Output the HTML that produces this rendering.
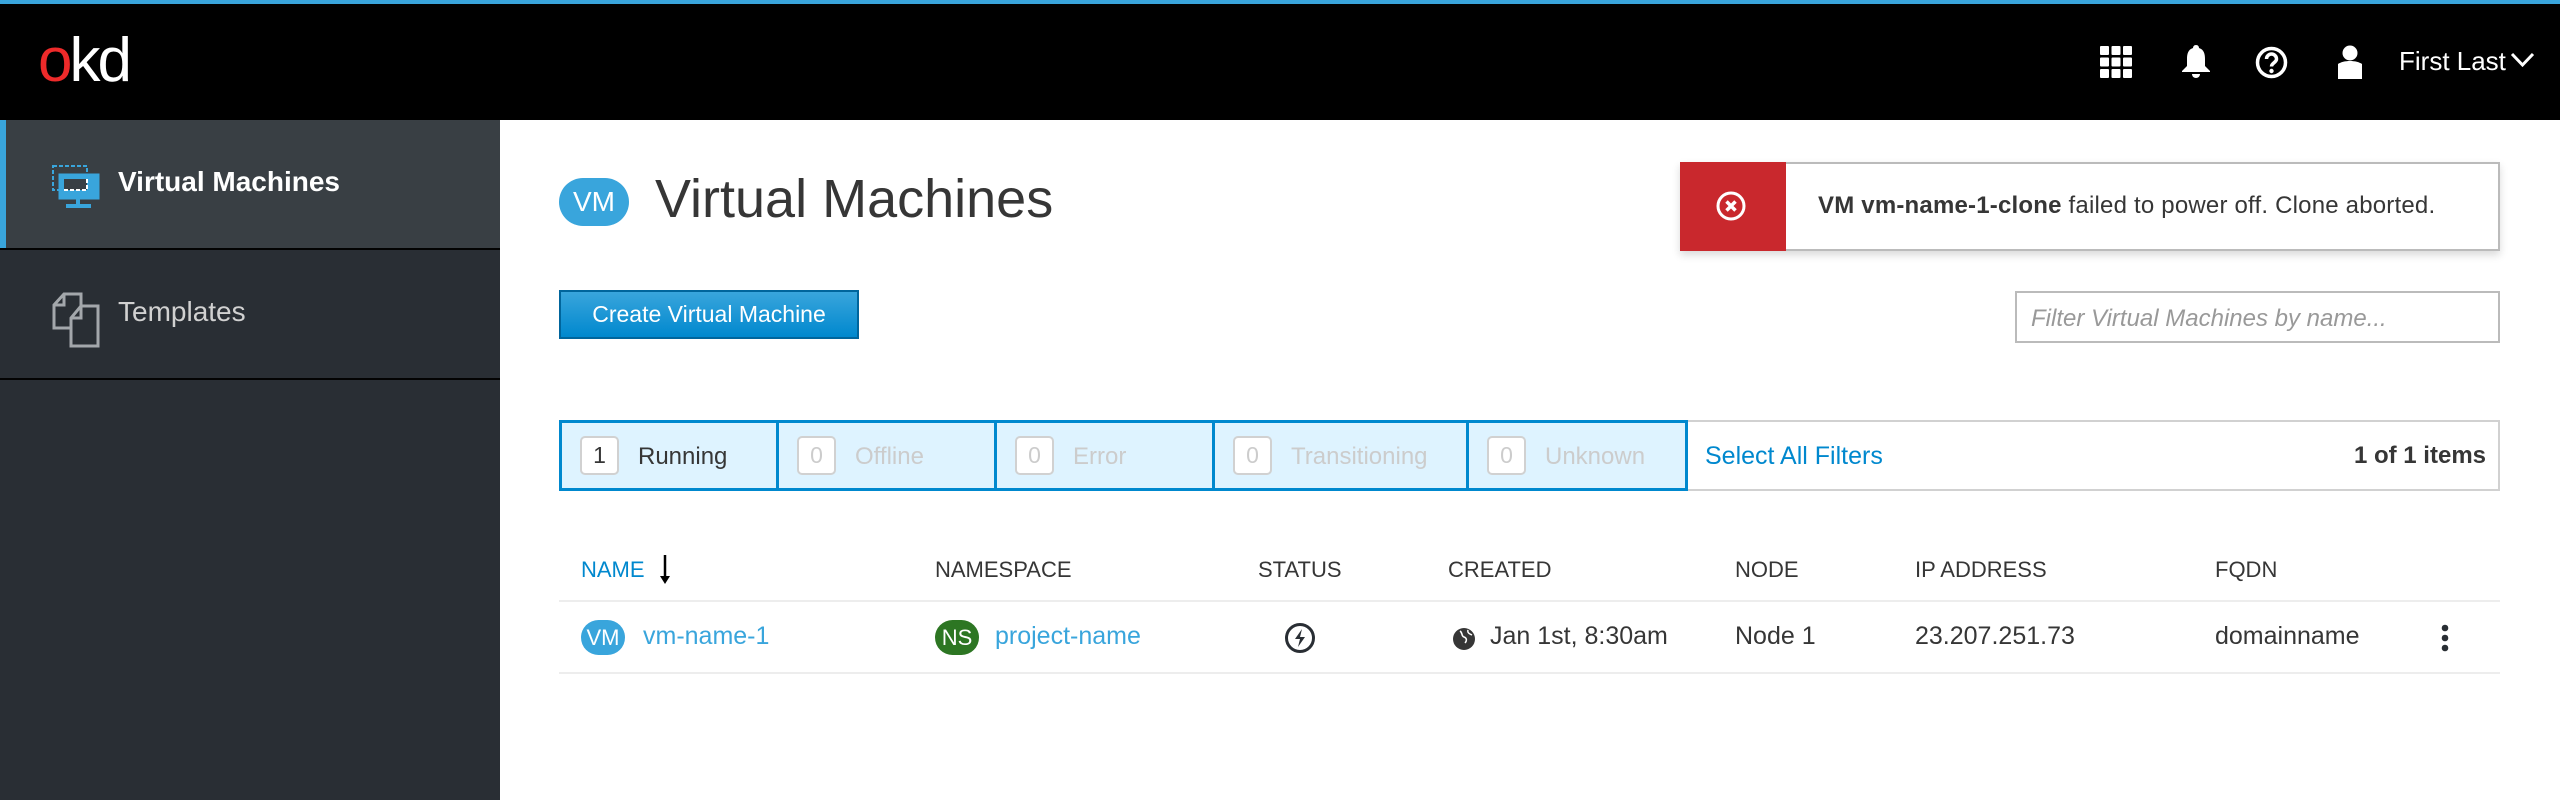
<!DOCTYPE html>
<html><head><meta charset="utf-8"><style>
*{margin:0;padding:0;box-sizing:border-box}
body{width:2560px;height:800px;overflow:hidden;background:#fff;font-family:"Liberation Sans",sans-serif;position:relative;color:#363636}
.a{position:absolute;white-space:nowrap}
.badge{position:absolute;border-radius:24px;color:#fff;text-align:center}
.fb{position:absolute;top:420px;height:71px;background:#def3ff;border:3px solid #0088ce}
.cnt{position:absolute;left:18px;top:13px;width:39px;height:39px;background:#fff;border:2px solid #d1d1d1;border-radius:5px;font-size:23px;line-height:35px;text-align:center;color:#ccc}
.fl{position:absolute;top:20px;font-size:24px;color:#ccc}
.th{position:absolute;top:557px;font-size:22px;color:#363636}
.td{position:absolute;top:622px;font-size:25px;color:#363636}
</style></head><body>
<div class="a" style="left:0;top:0;width:2560px;height:4px;background:#39a5dc"></div>
<div class="a" style="left:0;top:4px;width:2560px;height:116px;background:#000"></div>
<div class="a" style="left:38px;top:26px;font-size:62px;line-height:70px;letter-spacing:-3px;color:#fff;font-weight:300"><span style="color:#ee2a2a">o</span>kd</div>
<!-- grid -->
<svg class="a" style="left:2100px;top:46px" width="32" height="32" viewBox="0 0 32 32" fill="#fff">
<rect x="0" y="0" width="9" height="9" rx="1"/><rect x="11.5" y="0" width="9" height="9" rx="1"/><rect x="23" y="0" width="9" height="9" rx="1"/>
<rect x="0" y="11.5" width="9" height="9" rx="1"/><rect x="11.5" y="11.5" width="9" height="9" rx="1"/><rect x="23" y="11.5" width="9" height="9" rx="1"/>
<rect x="0" y="23" width="9" height="9" rx="1"/><rect x="11.5" y="23" width="9" height="9" rx="1"/><rect x="23" y="23" width="9" height="9" rx="1"/></svg>
<svg class="a" style="left:2180px;top:45px" width="32" height="34" viewBox="0 0 32 34" fill="#fff"><path d="M16 0c2 0 3 1.5 3 3 5 1.5 6 6 6 11v7l5 5v1H2v-1l5-5v-7c0-5 1-9.5 6-11 0-1.5 1-3 3-3zM12 29h8c0 2.5-2 4-4 4s-4-1.5-4-4z"/></svg>
<svg class="a" style="left:2255px;top:46px" width="33" height="33" viewBox="0 0 33 33"><circle cx="16.5" cy="16.5" r="14" fill="none" stroke="#fff" stroke-width="3.5"/><path d="M11.5 13a5 5 0 0 1 10 0c0 3.5-5 4-5 7.5" fill="none" stroke="#fff" stroke-width="3.5"/><circle cx="16.5" cy="25" r="2.2" fill="#fff"/></svg>
<svg class="a" style="left:2336px;top:45px" width="28" height="34" viewBox="0 0 28 34" fill="#fff"><circle cx="14" cy="8" r="7.5"/><path d="M2 19c3-2 7-3 12-3s9 1 12 3v15H2z"/></svg>
<div class="a" style="left:2399px;top:46px;font-size:26px;color:#fff">First Last</div>
<svg class="a" style="left:2510px;top:52px" width="25" height="16" viewBox="0 0 25 16"><path d="M2 2l10.5 11L23 2" fill="none" stroke="#fff" stroke-width="3"/></svg>
<!-- sidebar -->
<div class="a" style="left:0;top:120px;width:500px;height:680px;background:#292e34"></div>
<div class="a" style="left:0;top:120px;width:500px;height:128px;background:#393f44;border-left:6px solid #39a5dc"></div>
<div class="a" style="left:0;top:248px;width:500px;height:2px;background:#030303"></div>
<div class="a" style="left:0;top:378px;width:500px;height:2px;background:#030303"></div>
<svg class="a" style="left:52px;top:165px" width="48" height="43" viewBox="0 0 48 43"><rect x="6.5" y="8.5" width="41" height="26" fill="#39a5dc"/><rect x="14" y="39" width="25" height="4" fill="#39a5dc"/><rect x="24" y="34" width="4" height="6" fill="#39a5dc"/>
<rect x="1" y="1" width="34" height="24" fill="none" stroke="#39a5dc" stroke-width="2" stroke-dasharray="4 2"/><rect x="12" y="14" width="23" height="11" fill="#393f44"/><path d="M12 25h23V13" fill="none" stroke="#fff" stroke-width="2" stroke-dasharray="4 2"/></svg>
<div class="a" style="left:118px;top:166px;font-size:28px;font-weight:bold;color:#fff">Virtual Machines</div>
<svg class="a" style="left:52px;top:292px" width="48" height="56" viewBox="0 0 48 56" fill="none" stroke="#a3a7ab" stroke-width="3"><path d="M12 2h17v34H2V13z M2 13h10V2"/><path d="M29 14h17v40H19V26z M19 26h10V14" fill="#292e34"/></svg>
<div class="a" style="left:118px;top:296px;font-size:28px;color:#d1d1d1">Templates</div>
<!-- title -->
<div class="badge" style="left:559px;top:178px;width:70px;height:48px;background:#39a5dc;font-size:28px;line-height:48px">VM</div>
<div class="a" style="left:655px;top:168px;font-size:54px;font-weight:300;color:#363636">Virtual Machines</div>
<div class="a" style="left:559px;top:290px;width:300px;height:49px;background:linear-gradient(#39a5dc,#0088ce);border:2px solid #00659c;color:#fff;font-size:23px;line-height:45px;text-align:center">Create Virtual Machine</div>
<!-- toast -->
<div class="a" style="left:1680px;top:162px;width:820px;height:89px;background:#fff;border:2px solid #bbb;box-shadow:0 4px 8px rgba(0,0,0,.15)"></div>
<div class="a" style="left:1680px;top:162px;width:106px;height:89px;background:#c9282d"></div>
<svg class="a" style="left:1716px;top:191px" width="30" height="30" viewBox="0 0 30 30"><circle cx="15" cy="15" r="13" fill="none" stroke="#fff" stroke-width="3"/><path d="M10.5 10.5l9 9M19.5 10.5l-9 9" stroke="#fff" stroke-width="3.5"/></svg>
<div class="a" style="left:1818px;top:192px;font-size:24px;letter-spacing:0.2px;color:#363636"><b>VM vm-name-1-clone</b> failed to power off. Clone aborted.</div>
<!-- filter input -->
<div class="a" style="left:2015px;top:291px;width:485px;height:52px;border:2px solid #bbb;font-size:24px;font-style:italic;color:#999;padding:12px 0 0 14px">Filter Virtual Machines by name...</div>
<!-- filter bar -->
<div class="a" style="left:559px;top:420px;width:1941px;height:71px;border:2px solid #d1d1d1"></div>
<div class="fb" style="left:559px;width:223px"><div class="cnt" style="color:#363636">1</div><div class="fl" style="left:76px;color:#363636">Running</div></div>
<div class="fb" style="left:776px;width:224px"><div class="cnt">0</div><div class="fl" style="left:76px">Offline</div></div>
<div class="fb" style="left:994px;width:224px"><div class="cnt">0</div><div class="fl" style="left:76px">Error</div></div>
<div class="fb" style="left:1212px;width:260px"><div class="cnt">0</div><div class="fl" style="left:76px">Transitioning</div></div>
<div class="fb" style="left:1466px;width:222px"><div class="cnt">0</div><div class="fl" style="left:76px">Unknown</div></div>
<div class="a" style="left:1705px;top:442px;font-size:25px;color:#0088ce">Select All Filters</div>
<div class="a" style="left:2336px;top:442px;width:150px;text-align:right;font-size:24px;font-weight:bold;color:#363636">1 of 1 items</div>
<!-- table -->
<div class="th" style="left:581px;color:#0088ce">NAME</div>
<svg class="a" style="left:659px;top:555px" width="12" height="30" viewBox="0 0 12 30"><path d="M6 0v24" stroke="#000" stroke-width="2.5"/><path d="M1 21l5 8 5-8z"/></svg>
<div class="th" style="left:935px">NAMESPACE</div>
<div class="th" style="left:1258px">STATUS</div>
<div class="th" style="left:1448px">CREATED</div>
<div class="th" style="left:1735px">NODE</div>
<div class="th" style="left:1915px">IP ADDRESS</div>
<div class="th" style="left:2215px">FQDN</div>
<div class="a" style="left:559px;top:600px;width:1941px;height:2px;background:#ededed"></div>
<div class="a" style="left:559px;top:672px;width:1941px;height:2px;background:#ededed"></div>
<div class="badge" style="left:581px;top:620px;width:44px;height:35px;background:#39a5dc;font-size:22px;line-height:35px;border-radius:18px">VM</div>
<div class="td" style="left:643px;color:#39a5dc">vm-name-1</div>
<div class="badge" style="left:935px;top:620px;width:44px;height:35px;background:#2d7623;font-size:22px;line-height:35px;border-radius:18px">NS</div>
<div class="td" style="left:995px;color:#39a5dc">project-name</div>
<svg class="a" style="left:1284px;top:622px" width="32" height="32" viewBox="0 0 32 32"><circle cx="16" cy="16" r="13.5" fill="none" stroke="#292e34" stroke-width="3"/><path d="M18 7l-7 10h5l-2 8 7-10h-5z" fill="#292e34"/></svg>
<svg class="a" style="left:1452px;top:627px" width="24" height="24" viewBox="0 0 24 24"><circle cx="12" cy="12" r="11" fill="#363636"/><path d="M8 4c3 2 1 5 4 6s3 4 1 6M16 3c-1 3 2 4 4 5" stroke="#fff" stroke-width="1.5" fill="none"/></svg>
<div class="td" style="left:1490px">Jan 1st, 8:30am</div>
<div class="td" style="left:1735px">Node 1</div>
<div class="td" style="left:1915px">23.207.251.73</div>
<div class="td" style="left:2215px">domainname</div>
<svg class="a" style="left:2440px;top:624px" width="10" height="28" viewBox="0 0 10 28" fill="#292e34"><circle cx="5" cy="4" r="3.3"/><circle cx="5" cy="14" r="3.3"/><circle cx="5" cy="24" r="3.3"/></svg>
</body></html>
